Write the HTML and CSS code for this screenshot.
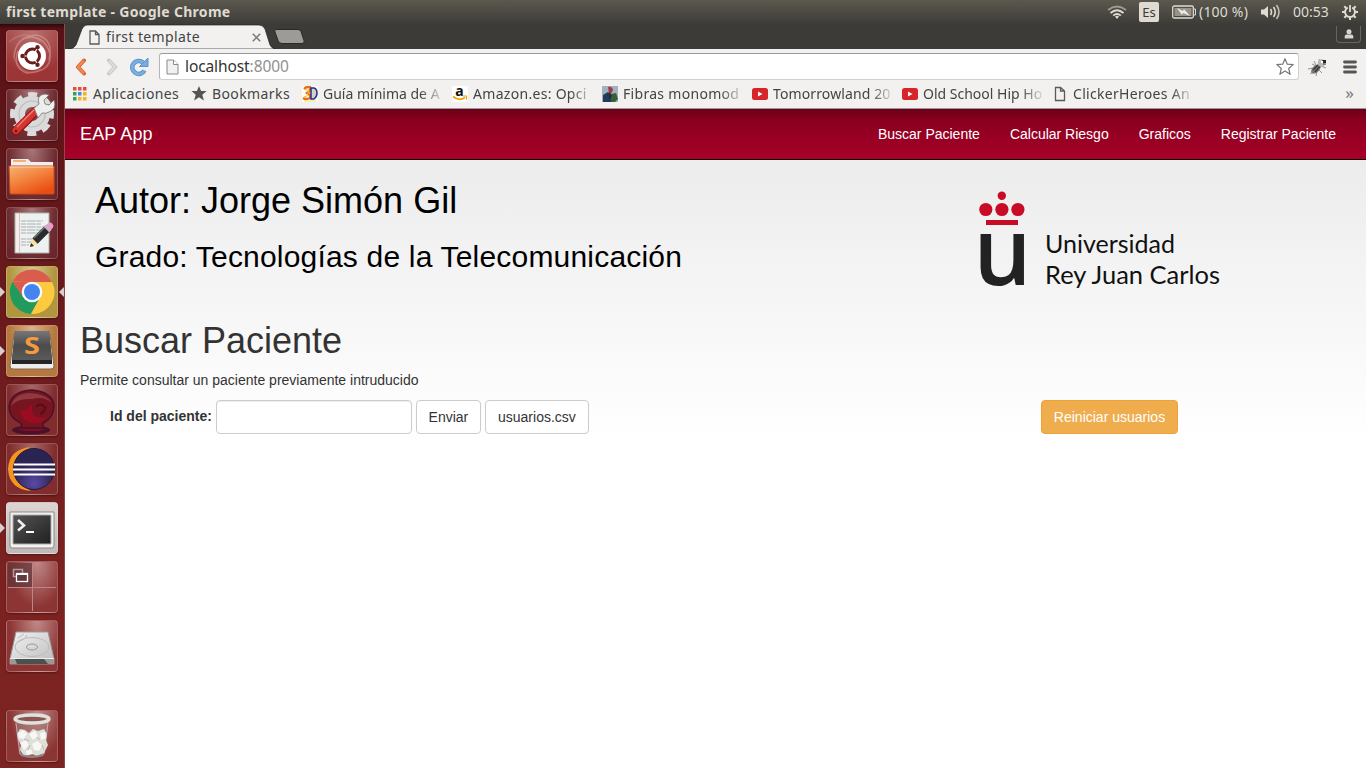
FILE: index.html
```html
<!DOCTYPE html>
<html lang="es">
<head>
<meta charset="utf-8">
<title>first template</title>
<link rel="stylesheet" href="styles.css">
</head>
<body>
<header class="panel">
  <span class="panel-title">first template - Google Chrome</span>
  <div class="tray">
    <svg class="wifi" width="20" height="16" viewBox="0 0 20 16" fill="none" stroke="#dfdbd2" stroke-width="1.8"><path d="M1 6Q10-1 19 6" opacity=".55"/><path d="M3.500 9Q10 3.500 16.500 9"/><path d="M6.200 11.600Q10 8.300 13.800 11.600"/><path d="M8 12.500Q10 11 12 12.500L10 15Z" fill="#dfdbd2" stroke="none"/></svg>
    <span class="lang">Es</span>
    <svg class="battery" width="24" height="14" viewBox="0 0 24 14"><rect x=".7" y="1" width="20.600" height="12" rx="1.500" fill="none" stroke="#dfdbd2" stroke-width="1.300"/><rect x="2.500" y="3" width="17" height="8" fill="#969389"/><path d="M22 4h1.500v6H22" fill="none" stroke="#dfdbd2"/><path d="M5 3l6 3 1-2 6 7-7-3-1 2z" fill="#eeeae2"/></svg>
    <span class="charge">(100 %)</span>
    <svg class="sound" width="21" height="16" viewBox="0 0 21 16" fill="none" stroke="#dfdbd2" stroke-width="1.600"><path d="M1 5.500h3L8 2v12l-4-3.500H1z" fill="#dfdbd2" stroke="none"/><path d="M10.500 5q2 3 0 6M13.500 3q3.500 5 0 10"/><path d="M16.500 1q5 7 0 14" opacity=".8"/></svg>
    <span class="clock">00:53</span>
    <svg class="gear" width="16" height="16" viewBox="0 0 16 16" fill="none" stroke="#dfdbd2"><path d="M5.800 3.600A5 5 0 1 0 10.200 3.600" stroke-width="2"/><path d="M8 1v7" stroke-width="1.800"/><path d="M8 13v3M0 8h3M13 8h3M2.300 2.300l2 2M13.700 2.300l-2 2M2.300 13.700l2-2M13.700 13.700l-2-2" stroke-width="2"/></svg>
  </div>
</header>
<div class="desktop">
  <nav class="launcher">
    <div class="tile t-dash"><svg viewBox="0 0 52 52"><g fill="none" stroke="#e5aaa5" opacity=".5" stroke-width="1.500"><path d="M8 28Q9 6 31 5Q48 9 43 30"/><path d="M16 9Q38 2 44 24Q46 42 21 43Q6 38 12 21"/><path d="M3 12Q20-2 35 12M8 28Q18 49 35 39" opacity=".6"/></g><circle cx="26" cy="26" r="14" fill="#fff"/><circle cx="26.500" cy="26" r="7" fill="none" stroke="#6b1d1e" stroke-width="3"/><g stroke="#fff" stroke-width="1.200"><path d="M27 26H16M27 26l5-9M27 26l5 9"/></g><circle cx="26.500" cy="26" r="5" fill="#fff"/><g fill="#6b1d1e"><circle cx="16.500" cy="26" r="2.200"/><circle cx="31.500" cy="17.300" r="2.200"/><circle cx="31.500" cy="34.700" r="2.200"/></g></svg></div>
    <div class="tile t-dark"><svg viewBox="0 0 52 52"><circle cx="26" cy="25" r="19.500" fill="none" stroke="#dcdcdc" stroke-width="5" stroke-dasharray="9 6.315" stroke-dashoffset="4.500"/><circle cx="26" cy="25" r="12.500" fill="none" stroke="#dadada" stroke-width="11"/><circle cx="26" cy="25" r="13" fill="none" stroke="#bdbdbd" stroke-width="1.200"/><path d="M10 42L30 22" stroke="#8a1715" stroke-width="9" stroke-linecap="round"/><path d="M10 41.500L30 21.500" stroke="#d5342f" stroke-width="7" stroke-linecap="round"/><path d="M11 38L28 21" stroke="#f08079" stroke-width="1.300"/><path d="M28 19l5-4q-3-9 6-10l4 1-5 5 1 4 4 1 5-5q3 9-5 12-3 2-7 1l-4 5z" fill="#ecefeb" stroke="#777" stroke-width=".8"/><circle cx="10" cy="42" r="1.300" fill="#701414"/></svg></div>
    <div class="tile t-dark"><svg viewBox="0 0 52 52"><defs><linearGradient id="fold" x2=".6" y2="1"><stop stop-color="#f5b377"/><stop offset=".5" stop-color="#f3833e"/><stop offset="1" stop-color="#e94f13"/></linearGradient></defs><path d="M5 19v-8h17l3 3h22v6z" fill="#f3eeee"/><path d="M7 13h13" stroke="#f6ad76" stroke-width="2"/><path d="M3 18h45v27q0 1-1 1H5q-1 0-1-1z" fill="url(#fold)" stroke="#cf4d16"/><path d="M4 19h43" stroke="#ffd6b2"/></svg></div>
    <div class="tile t-dark"><svg viewBox="0 0 52 52"><path d="M9 6h34v40H9z" fill="#edf2f0" stroke="#a8b4b0"/><path d="M13.500 6v40" stroke="#efb7b5"/><g stroke="#a9afb0" stroke-width="1" stroke-dasharray="5 .7 9 .7"><path d="M15 14h22M15 17h20M15 20h23M15 23h20M15 26h22M15 32h16M15 35h12M15 38h8"/></g><path d="M24 40l2-9 6 6z" fill="#f5e29e"/><path d="M29 34L42 21" stroke="#292c2d" stroke-width="7.500"/><path d="M28 31l12-12" stroke="#777" stroke-width="1.300"/><path d="M40.500 22.500l2.500-2.500" stroke="#c4c4c4" stroke-width="7.500"/><path d="M43 20l1-1" stroke="#e6a0c8" stroke-width="6.500" stroke-linecap="round"/><path d="M24 40l1-4 3 3z" fill="#2a2a2a"/></svg></div>
    <div class="tile t-chrome running focused"><svg viewBox="0 0 52 52"><circle cx="26" cy="26" r="22" fill="#f2bd36"/><path d="M6.500 15.500A22 22 0 0 1 46 16H26z" fill="#d95c4d"/><path d="M6.500 15.500A22 22 0 0 0 25 48L34.500 30.500 17 30z" fill="#209b5d"/><path d="M6.500 15.500L17.500 32 26 16z" fill="#d95c4d"/><path d="M26 16h20a22 22 0 0 1-21 32l10-18z" fill="#fcc93f"/><circle cx="26" cy="26" r="10.300" fill="#f7fafc"/><circle cx="26" cy="26" r="8" fill="#4584ef"/></svg></div>
    <div class="tile t-sublime running"><svg viewBox="0 0 52 52"><defs><linearGradient id="key" y2="1" x2="0"><stop stop-color="#777"/><stop offset=".5" stop-color="#4b4b4b"/><stop offset="1" stop-color="#5a5a5a"/></linearGradient></defs><path d="M8 9L4 41q0 3 3 3h38q3 0 3-3L44 9z" fill="#ededed" stroke="#86684a"/><path d="M9 6h34l3 30v3H6v-3z" fill="#252525"/><path d="M10 6h32q1 0 1 1l3 26q0 2-2 2H8q-2 0-2-2L9 7q0-1 1-1z" fill="url(#key)"/><text class="key-letter" transform="translate(26 28.500) scale(1.250 1)" text-anchor="middle">S</text></svg></div>
    <div class="tile t-maroon"><svg viewBox="0 0 52 52"><ellipse cx="25" cy="46" rx="19" ry="4.500" fill="#4a1129"/><ellipse cx="26" cy="45" rx="13" ry="2" fill="#7e1021"/><path d="M15 44q2-3-2-6Q3 33 3 23 5 7 26 6q21 2 22 16-1 12-9 16-4 2-1 6z" fill="#76151f" stroke="#4a1129" stroke-width="1.500"/><path d="M5 22Q8 10 23 9q18 1 23 10-8-7-20-4Q11 14 5 22z" fill="#8f3a40"/><path d="M14 26q5 2 12-6v7q1 7 9 7 5 0 7-4-3 10-16 9-11-2-12-13z" fill="#9b0c22"/><path d="M30 23q4-5 9 0 0 5-5 7" fill="none" stroke="#560c1b" stroke-width="2"/></svg></div>
    <div class="tile t-maroon"><svg viewBox="0 0 52 52"><defs><radialGradient id="ecl" cy=".85"><stop stop-color="#5b4aa5"/><stop offset="1" stop-color="#2a2453"/></radialGradient></defs><path d="M25 4Q3 6 2 26q1 20 23 22-13-8-13-22T25 4z" fill="#f7941e"/><circle cx="28" cy="26" r="20.500" fill="url(#ecl)" stroke="#211b40"/><path d="M8 21.500h41M7 26.500h42M8 31.500h41" stroke="#fff" stroke-width="2.200"/></svg></div>
    <div class="tile t-term running"><svg viewBox="0 1 52 52"><defs><linearGradient id="term" x2="1" y2="1"><stop stop-color="#555"/><stop offset="1" stop-color="#202020"/></linearGradient></defs><path d="M4 11h44v33q0 3-2 3H6q-2 0-2-3z" fill="#f2f2f0" stroke="#8b8989"/><path d="M7 14h38v29H7z" fill="url(#term)" stroke="#aaa"/><path d="M12 19l6 5.500-6 5" fill="none" stroke="#f2f2f2" stroke-width="2.500"/><path d="M20 31h8" stroke="#fff" stroke-width="2"/></svg></div>
    <div class="tile t-work"><svg viewBox="0 0 52 52"><path d="M2 2h24v24H2z" fill="#603338" opacity=".7"/><path d="M26.500 2v48M2 26.500h48" stroke="#bd8585"/><rect x="7.500" y="8.500" width="9" height="7" fill="none" stroke="#b39b9d" stroke-width="1.500"/><rect x="10.500" y="12.500" width="11" height="8" fill="#62393c" stroke="#fff" stroke-width="1.300"/><path d="M10 13h12" stroke="#fff" stroke-width="2"/></svg></div>
    <div class="tile t-work"><svg viewBox="0 0 52 52"><defs><linearGradient id="disk" x2="1" y2="1"><stop stop-color="#f2f2f2"/><stop offset="1" stop-color="#bcbcbc"/></linearGradient></defs><path d="M10 12h32l6 27v5H4v-5z" fill="url(#disk)" stroke="#999"/><path d="M4 39h44v5H4z" fill="#4c504e"/><path d="M4 39h5l2 5H4zM48 39h-10l4 5h6z" fill="#999"/><path d="M4 38.500h44" stroke="#eee"/><g fill="none" stroke="#bcbcbc"><ellipse cx="26" cy="27" rx="17" ry="9.500"/><ellipse cx="26" cy="27" rx="5.500" ry="3" stroke="#999"/><path d="M11 22q8-2 10-7M12 18l6-4"/></g></svg></div>
    <div class="tile t-work tile-trash"><svg viewBox="0 0 52 52"><path d="M9 10l4 34q12 6 25 0l5-34z" fill="#a98383" opacity=".45"/><path d="M10 13l4 31q12 5 24 0l4-31" fill="none" stroke="#c5abab"/><path d="M11 24l3-5 5 1 4 3 4-4 5 2 6-2 3 5-1 6 2 5-4 8-7 3-5-2-8 2-4-6 1-5-3-6z" fill="#dedfd9"/><g fill="#f7f7f4"><path d="M12 23l5-3 4 4-3 5-5-1zM23 24l6-3 3 5-5 4zM34 23l5-1 1 6-5 2zM14 33l6-3 3 5-5 5zM26 34l5-3 5 4-3 6-5-1zM20 41l5-2 2 5-6 1z"/></g><path d="M18 29l5 2M31 27l3 3M24 35l-2 5M36 35l2 5" stroke="#b5b7b0"/><path d="M15 45q11 4 22 0" fill="none" stroke="#858585" stroke-width="2"/><ellipse cx="26" cy="9" rx="17" ry="4" fill="#8c5452" stroke="#dee1dc" stroke-width="3.300"/></svg></div>
  </nav>
  <main class="browser">
    <div class="tabstrip">
      <div class="tab">
        <svg class="tab-shape" width="208" height="25" viewBox="0 0 208 25"><path d="M0 25q6 0 8-4l6-16q2-4 5-4h172q4 0 6 4l5 16q2 4 6 4z" fill="#f2f1f0" stroke="#24231f" stroke-width=".7"/></svg>
        <svg class="tab-page" width="11" height="15" viewBox="0 0 11 15"><path d="M1 1h5.500L10 4.500V14H1zM6.500 1v3.500H10" fill="none" stroke="#5a5a5a" stroke-width="1.300"/></svg>
        <span class="tab-title">first template</span>
        <svg class="tab-close" width="9" height="9" viewBox="0 0 9 9"><path d="M.8.800l7.400 7.400M8.200.800L.8 8.200" stroke="#777" stroke-width="1.500"/></svg>
      </div>
      <svg class="new-tab" width="31" height="15" viewBox="0 0 31 15"><path d="M2 .5h22q2 0 3 2l3 9q1 3-2 3H8q-3 0-4-3L1 3Q0 .5 2 .5z" fill="#9c9b98" stroke="#292824"/></svg>
      <div class="profile"><svg width="10" height="10" viewBox="0 0 10 10" fill="#d7d5cf"><circle cx="5" cy="2.800" r="2.500"/><path d="M.7 9.500V7.600q0-2 2-2h4.600q2 0 2 2v1.900z"/></svg></div>
    </div>
    <div class="toolbar">
      <svg class="back" width="12" height="18" viewBox="0 0 12 18"><path d="M9 2.500L3 9l6 6.500" fill="none" stroke="#d8602c" stroke-width="4" stroke-linejoin="round" stroke-linecap="round"/><path d="M9 2.500L3 9l6 6.500" fill="none" stroke="#f08a55" stroke-width="2.200"/></svg>
      <svg class="forward" width="12" height="18" viewBox="0 0 12 18"><path d="M3 2.500L9 9l-6 6.500" fill="none" stroke="#c9c7c4" stroke-width="4" stroke-linecap="round"/><path d="M3 2.500L9 9l-6 6.500" fill="none" stroke="#dfddda" stroke-width="2"/></svg>
      <svg class="reload" width="19" height="20" viewBox="0 0 19 20"><path d="M14.500 13.500A6.500 6.500 0 1 1 13 5.500" fill="none" stroke="#5b93cd" stroke-width="4.500"/><path d="M9.500 9.500H18V1z" fill="#78ade1" stroke="#5b93cd"/><path d="M14.500 13.500A6.500 6.500 0 1 1 13 5.500" fill="none" stroke="#7bb0e3" stroke-width="2.500"/></svg>
      <div class="omnibox">
        <svg class="url-page" width="13" height="16" viewBox="0 0 13 16"><path d="M1 1h6.500L12 5.500V15H1z" fill="#f1f1f1" stroke="#898989"/><path d="M7.500 1v4.500H12" fill="#fff" stroke="#898989"/></svg>
        <span class="url">localhost<span class="port">:8000</span></span>
        <svg class="star" width="20" height="20" viewBox="0 0 20 20"><path d="M10 1.700l2.300 5.500 5.900.4-4.500 3.900 1.400 5.800L10 14.100l-5.100 3.200 1.400-5.800L1.800 7.600l5.900-.4z" fill="none" stroke="#777" stroke-width="1.200" stroke-linejoin="round"/></svg>
      </div>
      <svg class="bug" width="20" height="20" viewBox="0 0 20 20"><g stroke="#777" stroke-width=".8" fill="none"><path d="M0 12l5-1M2 17l4-3M8 19l1-5M14 16l-3-3M6 4l2 4M11 2l1 4M18 11l-5-2M4 7l4 2"/></g><ellipse cx="8" cy="12" rx="6" ry="3.300" transform="rotate(-43 8 12)" fill="#77777a"/><path d="M5 13l5-5M7 15l5-6" stroke="#333" stroke-width="1.200"/><circle cx="13.500" cy="6" r="3.700" fill="#b8b8b8"/><path d="M14 3h4v3h-3z" fill="#252525"/><path d="M15 7h3" stroke="#444"/><circle cx="14" cy="5" r="1.200" fill="#fff"/></svg>
      <svg class="menu" width="14" height="14" viewBox="0 0 14 14"><path d="M1.500 2h11M1.500 7h11M1.500 12h11" stroke="#555" stroke-width="2.800" stroke-linecap="round"/></svg>
    </div>
    <div class="bookmarks">
      <a class="bm bm-apps"><svg width="14" height="14" viewBox="0 0 14 14"><path d="M0 0h3.500v3.500H0zM5 0h3.500v3.500H5zM10 0h3.500v3.500H10z" fill="#e64b3b"/><path d="M0 5h3.500v3.500H0z" fill="#31a35c"/><path d="M5 5h3.500v3.500H5z" fill="#4387ee"/><path d="M10 5h3.500v3.500H10zM5 10h3.500v3.500H5zM10 10h3.500v3.500H10z" fill="#f3b51b"/><path d="M0 10h3.500v3.500H0z" fill="#31a35c"/></svg><span class="bm-text">Aplicaciones</span></a>
      <a class="bm bm-folder"><svg width="16" height="15" viewBox="0 0 16 15"><path d="M8 0l2.100 5H15.500l-4.200 3.700 1.600 5.700L8 11.200l-4.900 3.200 1.600-5.700L.5 5h5.400z" fill="#555"/></svg><span class="bm-text">Bookmarks</span></a>
      <a class="bm bm-site"><svg width="16" height="16" viewBox="0 0 16 16"><path d="M0 0h16v16H0z" fill="#fbfbf4"/><path d="M2 3q3-3 6-2v4L5 7l3 2v3q-4 2-7 0" fill="none" stroke="#ec6b1a" stroke-width="2.300"/><path d="M3 4h4L5 10l-3 1" fill="none" stroke="#e7c621"/><path d="M9 2h3q3 1 3 5t-3 6H9z" fill="#d5d3ba" stroke="#252d94" stroke-width="1.500"/><path d="M2 15h12" stroke="#eee66a"/></svg><span class="bm-text fade snug">Guía mínima de A</span></a>
      <a class="bm bm-site"><svg width="16" height="16" viewBox="0 0 16 16"><rect width="16" height="16" rx="2" fill="#fff"/><text class="amazon-letter" x="7.500" y="10" text-anchor="middle">a</text><path d="M1 10.500q6 5 12 1" fill="none" stroke="#f5a000" stroke-width="1.700"/><path d="M11 10h3.500v3.500" fill="none" stroke="#f5a000" stroke-width="1.200"/></svg><span class="bm-text fade roomy">Amazon.es: Opci</span></a>
      <a class="bm bm-site"><svg width="16" height="16" viewBox="0 0 16 16"><path d="M0 0h16v16H0z" fill="#a1b2bd"/><path d="M6 1q4-1 5 3L9 8H7z" fill="#a63a4b"/><path d="M1 9l5-3 4 4-1 6H1z" fill="#233d59"/><path d="M9 8l5-1 2 6-3 3H9z" fill="#366039"/><path d="M7 6l3 4-3 3z" fill="#252c33"/></svg><span class="bm-text fade roomy">Fibras monomod</span></a>
      <a class="bm bm-site"><svg width="16" height="16" viewBox="0 0 16 16"><rect y="2" width="16" height="12" rx="2.500" fill="#d7262b"/><path d="M6 5.500v5L10.500 8z" fill="#fff"/></svg><span class="bm-text fade">Tomorrowland 20</span></a>
      <a class="bm bm-site"><svg width="16" height="16" viewBox="0 0 16 16"><rect y="2" width="16" height="12" rx="2.500" fill="#d7262b"/><path d="M6 5.500v5L10.500 8z" fill="#fff"/></svg><span class="bm-text fade snug">Old School Hip Ho</span></a>
      <a class="bm bm-site"><svg width="16" height="16" viewBox="0 0 16 16"><path d="M3.500 1.500h5L12.500 5v9.500h-9zM8.500 1.500V5h4" fill="none" stroke="#5a5a5a" stroke-width="1.300"/></svg><span class="bm-text fade roomy">ClickerHeroes An</span></a>
      <span class="more">»</span>
    </div>
    <div class="page">
      <div class="navbar">
        <a class="brand">EAP App</a>
        <div class="links"><a>Buscar Paciente</a><a>Calcular Riesgo</a><a>Graficos</a><a>Registrar Paciente</a></div>
      </div>
      <section class="hero">
        <div class="credits"><h1 class="author">Autor: Jorge Simón Gil</h1><h2 class="degree">Grado: Tecnologías de la Telecomunicación</h2></div>
        <svg class="logo" width="250" height="110" viewBox="0 0 250 110"><g fill="#c90c25"><circle cx="26.800" cy="10.700" r="4.200"/><circle cx="10.800" cy="24.500" r="6.600"/><circle cx="26.900" cy="24.500" r="6.600"/><circle cx="42.900" cy="24.500" r="6.600"/><path d="M11 35h32v5H11z"/></g><text class="logo-u" transform="translate(-1.500 100) scale(.96 1)">u</text><text class="logo-text" x="70" y="67.500" textLength="130" lengthAdjust="spacingAndGlyphs">Universidad</text><text class="logo-text" x="70" y="99" textLength="175" lengthAdjust="spacingAndGlyphs">Rey Juan Carlos</text></svg>
      </section>
      <section class="search">
        <h1 class="heading">Buscar Paciente</h1>
        <p class="lead">Permite consultar un paciente previamente intruducido</p>
        <form class="form">
          <label class="label" for="pid">Id del paciente:</label>
          <input class="field" id="pid" type="text">
          <button class="btn btn-send" type="button">Enviar</button>
          <button class="btn btn-file" type="button">usuarios.csv</button>
          <button class="btn btn-warning" type="button">Reiniciar usuarios</button>
        </form>
      </section>
    </div>
  </main>
</div>
</body>
</html>
```

FILE: styles.css
```css
* { box-sizing: border-box; }
body { margin: 0; width: 1366px; height: 768px; overflow: hidden; display: flex; flex-direction: column; font-family: "Noto Sans", "Open Sans", sans-serif; }
svg { display: block; flex: none; }

.panel { height: 24px; flex: none; display: flex; align-items: center; justify-content: space-between; padding: 0 8px 0 6px; color: #dfdbd2; background: linear-gradient(#5b584e, #3d3c38); font-size: 14px; line-height: 20px; white-space: nowrap; }
.panel-title { font-weight: 700; letter-spacing: .29px; }
.tray { display: flex; align-items: center; }
.lang { width: 20px; height: 20px; margin: 0 13px 0 12px; border-radius: 2px; background: #dfdbd2; color: #3c3b37; font-size: 13px; line-height: 20px; text-align: center; }
.charge { margin-left: 3px; width: 49px; letter-spacing: .2px; }
.sound { margin-left: 12px; }
.clock { margin: 0 12px; width: 37px; }

.desktop { flex: 1; display: flex; min-height: 0; }
.launcher { width: 65px; flex: none; display: flex; flex-direction: column; gap: 7px; padding: 6px 0 6px 6px; background: linear-gradient(#2e0a0c, #5a1116 5px, #63171a 180px, #7b2221 560px, #7c2421); border-right: 1px solid #8d4a4b; }
.tile { width: 52px; height: 52px; flex: none; position: relative; border-radius: 4px; border: 1px solid rgba(255,255,255,.2); box-shadow: 0 1px 2px rgba(0,0,0,.35); }
.tile svg { width: 52px; height: 52px; margin: -1px; }
.tile-trash { margin-top: auto; }
.t-dash { background: radial-gradient(circle at 50% 0, #b87370, #9c3535 75%); }
.t-dark { background: radial-gradient(ellipse at 50% 0, #a97678, #6f2d32 65%, #672329); }
.t-chrome { background: radial-gradient(ellipse at 50% 0, #d4c78f, #b1963f 65%); }
.t-sublime { background: radial-gradient(ellipse at 50% 0, #dcb38c, #b5793f 65%); }
.t-maroon { background: radial-gradient(ellipse at 50% 0, #a76766, #812d2e 65%); }
.t-term { background: linear-gradient(#ddd4d4, #c0b8b7); }
.t-work { background: radial-gradient(ellipse at 60% 0, #c08a88, #8c3534 65%); }
.running::before { content: ""; position: absolute; left: -7px; top: 20px; border: 5px solid transparent; border-left-color: #d8cfcf; border-right: 0; }
.focused::after { content: ""; position: absolute; right: -7px; top: 20px; border: 5px solid transparent; border-right-color: #d8cfcf; border-left: 0; }
.key-letter { font: 700 23px "Open Sans", sans-serif; fill: #f79a3e; }

.browser { flex: 1; min-width: 0; display: flex; flex-direction: column; }
.tabstrip { height: 25px; flex: none; display: flex; background: #3c3b37; }
.tab { position: relative; width: 208px; height: 25px; padding: 1px 0 0 24px; display: flex; align-items: center; }
.tab-shape { position: absolute; left: 3px; top: 0; }
.tab-page { position: relative; }
.tab-title { position: relative; margin-left: 6px; width: 146px; font-size: 14px; line-height: 20px; letter-spacing: .38px; color: #444; white-space: nowrap; }
.tab-close { position: relative; }
.new-tab { position: relative; margin: 5px 0 0 1px; }
.profile { margin: 2px 5px 0 auto; width: 25px; height: 17px; border: 1px solid #686660; border-top: 0; border-radius: 0 0 4px 4px; display: flex; align-items: center; justify-content: center; }
.toolbar { height: 33px; flex: none; display: flex; align-items: center; padding: 2px 9px 0 10px; background: #f2f1f0; }
.forward { margin-left: 19px; }
.reload { margin-left: 12px; }
.omnibox { width: 1140px; height: 27px; margin-left: 10px; border: 1px solid #d0d0d0; border-top-color: #999; border-left-color: #b5b5b5; border-radius: 3px; background: #fff; display: flex; align-items: center; padding: 0 3px 0 6px; }
.url { margin-left: 6px; padding-bottom: 2px; font-size: 15.5px; line-height: 20px; letter-spacing: -.1px; color: #333; }
.port { color: #909090; }
.star { margin-left: auto; }
.bug { margin-left: 9px; }
.menu { margin-left: auto; }
.bookmarks { height: 27px; flex: none; display: flex; align-items: center; padding: 0 12px 3px 8px; background: #f2f1f0; border-bottom: 1px solid #999; font-size: 14px; line-height: 20px; color: #444; }
.bm { display: flex; align-items: center; gap: 5px; white-space: nowrap; flex: none; letter-spacing: .4px; }
.bm-apps { width: 118px; gap: 6px; }
.bm-folder { width: 111px; }
.bm-site { width: 138px; margin-right: 12px; letter-spacing: .12px; }
.bm-text { flex: none; padding-top: 1px; }
.snug { letter-spacing: 0; }
.roomy { letter-spacing: .3px; }
.fade { width: 119px; -webkit-mask-image: linear-gradient(90deg, #000 82%, rgba(0,0,0,.15)); mask-image: linear-gradient(90deg, #000 82%, rgba(0,0,0,.15)); }
.amazon-letter { font: 700 14px "Noto Sans", sans-serif; fill: #111; }
.more { margin-left: auto; padding-bottom: 1px; font-size: 17px; color: #777; }

.page { flex: 1; font-family: "Liberation Sans", Arial, sans-serif; font-size: 14px; line-height: 20px; color: #333; background: linear-gradient(#ececec 50px, #fff 330px); }
.navbar { height: 51px; display: flex; align-items: center; justify-content: space-between; padding: 0 30px 0 15px; color: #fff; border-bottom: 1px solid #080808; background: linear-gradient(#6b0018, #8b001f 12px, #a80028); }
.brand { font-size: 18px; letter-spacing: .14px; }
.links { display: flex; gap: 30px; }
.hero { display: flex; justify-content: space-between; padding: 21px 132px 0 30px; height: 141px; color: #000; }
.author, .degree, .heading { font-weight: 500; line-height: 1.1; }
.author { margin: 0; font-size: 36px; }
.degree { margin: 19px 0 10px; font-size: 30px; letter-spacing: .19px; }
.logo { margin-top: 4px; margin-right: 9px; }
.logo-u { font: 600 95px "Open Sans", sans-serif; fill: #222; }
.logo-text { font: 400 25px Lato, sans-serif; fill: #111; }
.search { padding: 20px 15px 0; }
.heading { margin: 0 0 9px; font-size: 36px; }
.lead { margin: 0 0 10px; }
.form { display: flex; align-items: center; gap: 4px; padding-left: 30px; padding-right: 173px; }
.label { font-weight: 700; padding-bottom: 2px; }
.field { width: 196px; height: 34px; border: 1px solid #ccc; border-radius: 4px; background: #fff; box-shadow: inset 0 1px 1px rgba(0,0,0,.075); }
.btn { height: 34px; padding: 6px 0; border: 1px solid #ccc; border-radius: 4px; background: #fff; color: #333; font: 14px/20px "Liberation Sans", Arial, sans-serif; }
.btn-send { width: 65px; }
.btn-file { width: 104px; }
.btn-warning { margin-left: auto; width: 137px; background: #f0ad4e; border-color: #eea236; color: #fff; }
```
